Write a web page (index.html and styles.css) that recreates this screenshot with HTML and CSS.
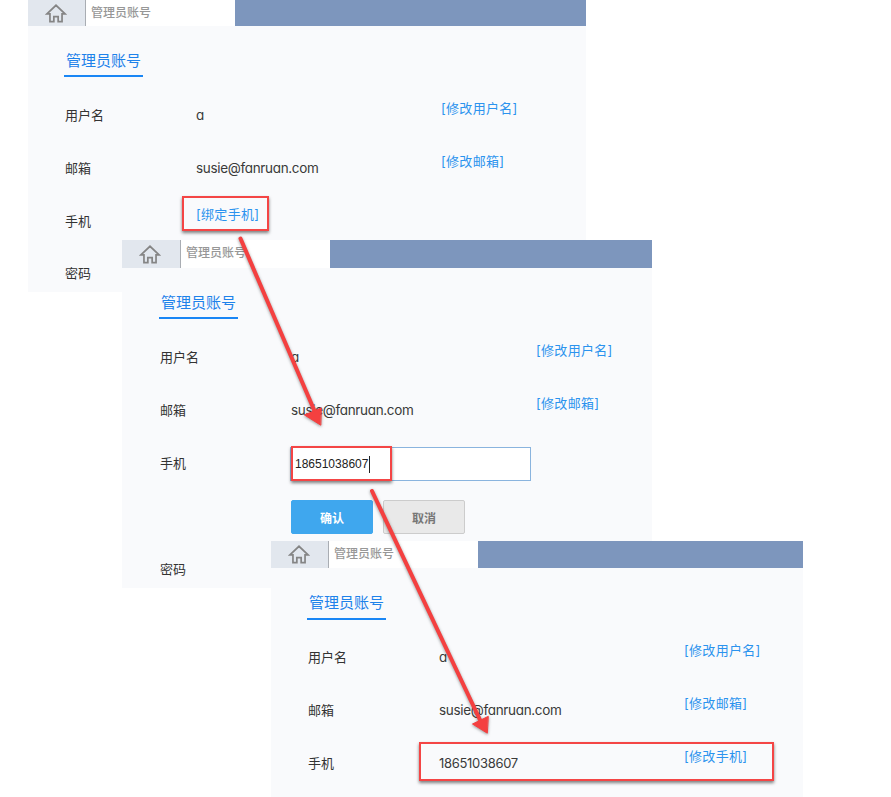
FILE: index.html
```html
<!DOCTYPE html>
<html lang="zh">
<head>
<meta charset="utf-8">
<title>管理员账号</title>
<link rel="stylesheet" href="styles.css">
</head>
<body>
<section class="window win-a">
  <div class="tabs">
    <div class="home"><svg class="home-icon" viewBox="0 0 24 22"><path d="M1.500 11.500 12 1.500l10.500 10h-3.500v9h-4.500v-6h-5v6H5v-9z"/></svg></div>
    <div class="tab-title">管理员账号</div>
  </div>
  <div class="content">
    <h2 class="heading">管理员账号</h2>
    <div class="row"><span class="label">用户名</span><span class="value">a</span><a class="link">[修改用户名]</a></div>
    <div class="row"><span class="label">邮箱</span><span class="value">susie@fanruan.com</span><a class="link">[修改邮箱]</a></div>
    <div class="row row-short"><span class="label">手机</span><a class="link bind">[绑定手机]</a></div>
    <div class="row"><span class="label">密码</span></div>
  </div>
</section>

<section class="window win-b">
  <div class="tabs">
    <div class="home"><svg class="home-icon" viewBox="0 0 24 22"><path d="M1.500 11.500 12 1.500l10.500 10h-3.500v9h-4.500v-6h-5v6H5v-9z"/></svg></div>
    <div class="tab-title">管理员账号</div>
  </div>
  <div class="content">
    <h2 class="heading">管理员账号</h2>
    <div class="row"><span class="label">用户名</span><span class="value">a</span><a class="link">[修改用户名]</a></div>
    <div class="row"><span class="label">邮箱</span><span class="value">susie@fanruan.com</span><a class="link">[修改邮箱]</a></div>
    <div class="row row-form">
      <span class="label">手机</span>
      <div class="form">
        <div class="input"><span class="input-text">18651038607</span><span class="caret"></span></div>
        <div class="actions"><button class="btn primary">确认</button><button class="btn">取消</button></div>
      </div>
    </div>
    <div class="row"><span class="label">密码</span></div>
  </div>
</section>

<section class="window win-c">
  <div class="tabs">
    <div class="home"><svg class="home-icon" viewBox="0 0 24 22"><path d="M1.500 11.500 12 1.500l10.500 10h-3.500v9h-4.500v-6h-5v6H5v-9z"/></svg></div>
    <div class="tab-title">管理员账号</div>
  </div>
  <div class="content">
    <h2 class="heading">管理员账号</h2>
    <div class="row"><span class="label">用户名</span><span class="value">a</span><a class="link">[修改用户名]</a></div>
    <div class="row"><span class="label">邮箱</span><span class="value">susie@fanruan.com</span><a class="link">[修改邮箱]</a></div>
    <div class="row"><span class="label">手机</span><span class="value digits">18651038607</span><a class="link">[修改手机]</a></div>
  </div>
</section>

<div class="mark mark-a"></div>
<div class="mark mark-b"></div>
<div class="mark mark-c"></div>

<svg class="arrows" viewBox="0 0 891 797">
  <g class="arrow">
    <path d="M240.500 238.500 315 412"/>
    <path class="head" d="M320.500 425 304.500 415 321 408z"/>
  </g>
  <g class="arrow">
    <path d="M372 491 481 722"/>
    <path class="head" d="M487 733 472.500 724 488 716.500z"/>
  </g>
</svg>
</body>
</html>
```
FILE: styles.css
```css
* { box-sizing: border-box; }
html, body { margin: 0; padding: 0; }
body {
  position: relative;
  width: 891px;
  height: 797px;
  overflow: hidden;
  background: #fff;
  font-family: "Inter", "Noto Sans CJK SC", sans-serif;
  color: #333;
}
.window { position: absolute; background: #f9fafc; overflow: hidden; }
.win-a { left: 28px; top: 0; width: 558px; height: 292px; }
.win-b { left: 122px; top: 240px; width: 530px; height: 348px; }
.win-c { left: 271px; top: 541px; width: 532px; height: 256px; }

.tabs { display: flex; height: 27px; background: #7d96bd; }
.win-a .tabs { height: 26px; }
.win-b .tabs { height: 28px; }
.home {
  width: 58px;
  background: #e2e7ee;
  border-right: 1px solid #a9adb3;
  display: flex;
  align-items: center;
  justify-content: center;
}
.win-b .home { width: 59px; }
.home-icon { width: 22px; height: 19px; margin-right: 2px; }
.home-icon path { fill: none; stroke: #858585; stroke-width: 2; stroke-linejoin: miter; }
.tab-title {
  width: 149px;
  background: #fff;
  padding-left: 5px;
  font-family: "Noto Sans CJK SC", sans-serif;
  font-size: 12px;
  font-weight: 500;
  line-height: 24px;
  color: #979797;
}

.content { padding: 14px 0 0 37px; }
.win-b .content { padding-left: 38px; }
.heading {
  width: 79px;
  height: 37px;
  margin: 0 0 11px -1px;
  padding: 9px 0 0 2px;
  font-family: "Noto Sans CJK SC", sans-serif;
  font-size: 15px;
  font-weight: 400;
  line-height: 22px;
  color: #1e82ea;
  border-bottom: 2px solid #1a86f5;
  white-space: nowrap;
}
.win-c .heading { height: 38px; margin-bottom: 10px; }

.row {
  display: grid;
  grid-template-columns: 131px 245px auto;
  height: 53px;
  font-size: 13px;
  line-height: 20px;
}
.row-short { height: 52px; }
.row-form { height: 106px; }
.label { grid-column: 1; padding-top: 17px; color: #333; white-space: nowrap; }
.value {
  grid-column: 2;
  padding-top: 17px;
  font-size: 13.500px;
  font-feature-settings: "cv11" 1;
  letter-spacing: -0.33px;
  color: #3a3a3a;
  white-space: nowrap;
}
.value.digits { font-size: 13px; letter-spacing: -0.3px; }
.link {
  grid-column: 3;
  padding-top: 10px;
  font-size: 13px;
  letter-spacing: 0.3px;
  color: #2b93ee;
  white-space: nowrap;
}
.link.bind { grid-column: 2; padding-top: 10px; }

.form { grid-column: 2 / span 2; padding-top: 11px; margin-left: -1px; }
.input {
  width: 241px;
  height: 34px;
  display: flex;
  align-items: center;
  padding-left: 4px;
  background: #fff;
  border: 1px solid #8ab4de;
  color: #222;
}
.input-text { font-family: "Liberation Sans", sans-serif; font-size: 12px; }
.caret { width: 1px; height: 17px; background: #222; margin-left: 1px; }
.actions { display: flex; gap: 10px; margin: 19px 0 0 1px; }
.btn {
  width: 82px;
  height: 34px;
  padding: 0;
  border: 1px solid #ccc;
  border-radius: 2px;
  background: #e9e9e9;
  color: #777;
  font: 700 12px "Noto Sans CJK SC", sans-serif;
}
.btn.primary { background: #3fa7ee; border-color: #3fa7ee; color: #fff; }

.mark {
  position: absolute;
  border: 2px solid #f44545;
  box-shadow: 0 2px 3px rgba(60, 60, 60, .65);
}
.mark-a { left: 182px; top: 196px; width: 87px; height: 35px; }
.mark-b { left: 291px; top: 446px; width: 101px; height: 35px; }
.mark-c { left: 419px; top: 742px; width: 355px; height: 39px; }

.arrows { position: absolute; left: 0; top: 0; width: 891px; height: 797px; pointer-events: none; }
.arrow { filter: drop-shadow(0 1.500px 1.500px rgba(50, 50, 50, .5)); }
.arrow path { fill: none; stroke: #f44040; stroke-width: 4; stroke-linecap: round; }
.arrow .head { fill: #f44040; stroke-width: 1; stroke-linejoin: round; }
```
